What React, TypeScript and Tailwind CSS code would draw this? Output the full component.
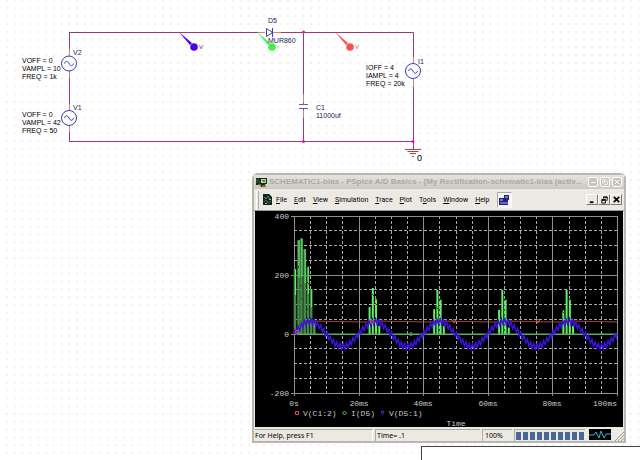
import { Copy, Minus, X } from 'lucide-react';
import type { ReactNode } from 'react';

const MENU = ['File', 'Edit', 'View', 'Simulation', 'Trace', 'Plot', 'Tools', 'Window', 'Help'];
const MNEMONIC: Record<string, number> = { Tools: 1 };

// plot area, in the chart's own units
const LEFT = 39;
const TOP = 5;
const WIDTH = 323;
const HEIGHT = 177;
const xOf = (ms: number) => LEFT + (ms / 100) * WIDTH;
const yOf = (value: number) => TOP + ((400 - value) / 600) * HEIGHT;

const FIRST_SPIKES = [
  [0.3, 220],
  [1.4, 318],
  [2.3, 324],
  [3.3, 288],
  [4.3, 228],
  [5.3, 152],
  [6.3, 42],
];
const SPIKE_GROUPS = [
  { start: 23.4, peaks: [92, 156, 118, 28] },
  { start: 43.4, peaks: [84, 150, 116, 28] },
  { start: 63.5, peaks: [82, 150, 116, 22] },
  { start: 83.4, peaks: [80, 150, 116, 28] },
];

export default function App() {
  return (
    <main className="relative min-h-screen overflow-hidden bg-white font-['Liberation_Sans',sans-serif]">
      <Schematic />
      <div className="absolute top-[446px] right-0 bottom-0 left-[421px] border-t border-l border-[#444] bg-white/60" />
      <SimulationWindow />
    </main>
  );
}

function Schematic() {
  return (
    <svg className="absolute inset-0 size-full" fontSize="7" fill="none" role="img" aria-label="Schematic">
      <defs>
        <pattern id="dots" x="3" y="4.5" width="7.8" height="7.8" patternUnits="userSpaceOnUse">
          <rect x="3.4" y="3.4" width="1" height="1" fill="#c4c4d0" />
        </pattern>
      </defs>
      <rect width="100%" height="100%" fill="url(#dots)" />

      <g stroke="#9a3a78">
        <path d="M69 32.500H265M273 32.500H413.500V63M413.500 79V149M69 141.500H413.500" />
        <path d="M69.500 32V55.500M69.500 71V110M69.500 126V141.500M303.500 32V104M303.500 109V141" />
      </g>
      <g stroke="#d98080">
        <path d="M69.500 49V56M69.500 71V78M69.500 104V110M69.500 126V132M413.500 57V63M413.500 79V87" />
        <path d="M258 32.500H265M273 32.500H281M303.500 94V103M303.500 110V118" />
      </g>

      <Source x={69} y={63.5} />
      <Source x={69} y={118} />
      <Source x={413} y={71} />

      <path d="M266.500 28.500V36.500L272.500 32.500ZM272.500 28V37" stroke="#3b3bb0" />
      <path d="M299 104.500H308M299 108.500H308" stroke="#5a5ac0" />
      <g fill="#e010d0">
        <circle cx="303.500" cy="32" r="1.500" />
        <circle cx="303.500" cy="141.500" r="1.500" />
        <circle cx="413" cy="141.500" r="1.500" />
      </g>
      <path d="M405 149.500H421M407.500 151.500H418.500M410 153.500H416M412 156.500H414" stroke="#b83c48" />

      <Probe x={194} y={47} color="#5200f0" label="V" />
      <Probe x={272} y={47} color="#44f044" label="I" />
      <Probe x={350} y={47} color="#ff5050" label="V" />

      <g fill="#000">
        <text x="22" y="63">VOFF = 0</text>
        <text x="22" y="71">VAMPL = 10</text>
        <text x="22" y="79">FREQ = 1k</text>
        <text x="22" y="117">VOFF = 0</text>
        <text x="22" y="125">VAMPL = 42</text>
        <text x="22" y="133">FREQ = 50</text>
        <text x="366" y="70">IOFF = 4</text>
        <text x="366" y="78">IAMPL = 4</text>
        <text x="366" y="86">FREQ = 20k</text>
        <text x="417" y="161" fontSize="9">0</text>
      </g>
      <g fill="#18185c">
        <text x="73" y="55">V2</text>
        <text x="73" y="110">V1</text>
        <text x="268" y="23">D5</text>
        <text x="268" y="43">MUR860</text>
        <text x="316" y="110">C1</text>
        <text x="316" y="118">11000uf</text>
        <text x="418" y="64">I1</text>
      </g>
    </svg>
  );
}

function Source({ x, y }: { x: number; y: number }) {
  return (
    <g transform={`translate(${x} ${y})`} stroke="#3a3ab8">
      <circle r="7.500" />
      <path d="M-4.500 0C-3.500 -3 -1.500 -3 0 0S3.500 3 4.500 0" />
    </g>
  );
}

function Probe({ x, y, color, label }: { x: number; y: number; color: string; label: string }) {
  return (
    <g transform={`translate(${x} ${y})`} fill={color}>
      <path d="M-15 -15L-2 -4L-4 -2Z" />
      <circle r="3.800" />
      <text x="5" y="2" fontSize="6">{label}</text>
    </g>
  );
}

function SimulationWindow() {
  return (
    <section className="absolute top-[173px] left-[252px] w-[374px] rounded-t-md border-2 border-[#b9b7b0] bg-[#ece9e2] font-['Noto_Sans',sans-serif] text-[7px] text-black">
      <header className="flex h-[14px] items-center gap-0.5 bg-linear-to-b from-[#e6e4df] to-[#cbc8c1] pr-0.5 pl-0.5">
        <AppIcon />
        <h1 className="min-w-0 flex-1 font-['Liberation_Sans',sans-serif] text-[8px] leading-3 font-bold whitespace-nowrap text-[#aaa8a3]">
          SCHEMATIC1-bias - PSpice A/D Basics - [My Rectification-schematic1-bias (activ...
        </h1>
        <div className="flex gap-0.5">
          <CaptionButton label="Minimize"><Minus size={7} strokeWidth={3} /></CaptionButton>
          <CaptionButton label="Maximize"><Copy size={6} strokeWidth={3} /></CaptionButton>
          <CaptionButton label="Close"><X size={8} strokeWidth={3} /></CaptionButton>
        </div>
      </header>

      <div className="flex h-[22px] items-center border-b border-[#999] pr-0.5 pl-0.5">
        <span className="h-[18px] w-[3px] border-x border-x-white border-r-[#b0aea8]" />
        <DocumentIcon />
        <nav className="flex flex-1 items-center gap-[7px] font-['Roboto',sans-serif]">
          {MENU.map((item) => {
            const at = MNEMONIC[item] ?? 0;
            return (
              <button key={item} type="button" className="leading-3">
                {item.slice(0, at)}
                <span className="underline">{item[at]}</span>
                {item.slice(at + 1)}
              </button>
            );
          })}
          <button
            type="button"
            aria-label="Show plot"
            className="grid h-4 w-[15px] place-items-center border border-[#aaa] border-r-white border-b-white bg-[#f6f5f2]"
          >
            <svg width="10" height="10" viewBox="0 0 10 10">
              <path d="M0 3H5V0H10V5H9V10H0Z" fill="#20208c" />
              <path d="M1 5H4M6 2H9" stroke="#d8d8c0" />
              <path d="M1 8H3M4 7V9M6 7V9M8 7V9" stroke="#b0b0f0" />
            </svg>
          </button>
        </nav>
        <div className="flex">
          <DocumentButton label="Minimize document">
            <path d="M2 8H6" strokeWidth="2" />
          </DocumentButton>
          <DocumentButton label="Restore document">
            <path d="M4 2H8V6H7M4 2V4M4 3H8M2 5H6V9H2ZM2 6H6" />
          </DocumentButton>
          <DocumentButton label="Close document">
            <path d="M2 2L8 8M8 2L2 8" strokeWidth="2" />
          </DocumentButton>
        </div>
      </div>

      <div className="mx-px bg-black">
        <Chart />
      </div>

      <footer className="flex h-[14px] items-stretch gap-0.5 pt-0.5 pl-px leading-3">
        <p className="w-[118px] border-t border-r border-t-[#aaa] border-r-white">For Help, press F1</p>
        <p className="flex-1 border-t border-l border-[#aaa] pl-px">Time= .1</p>
        <p className="w-[30px] border-t border-l border-[#aaa] pl-0.5">100%</p>
        <div
          role="progressbar"
          aria-label="Progress"
          aria-valuenow={100}
          className="flex items-center gap-0.5 border-t border-l border-[#aaa] px-px"
        >
          {Array.from({ length: 10 }, (_, i) => (
            <span key={i} className="h-2 w-[5px] bg-[#4b6798]" />
          ))}
        </div>
        <svg className="mx-0.5 h-[11px] w-[22px] bg-black" viewBox="0 0 22 11" fill="none">
          <path d="M0 6H5L7 3L10 9L12 2L15 9L17 5H22" stroke="#30b0d0" />
        </svg>
        <svg className="h-3 w-[9px]" viewBox="0 0 9 12" fill="none">
          <path d="M0 12L9 3M3 12L9 6M6 12L9 9" stroke="#a09e98" />
        </svg>
      </footer>
    </section>
  );
}

function CaptionButton({ label, children }: { label: string; children: ReactNode }) {
  return (
    <button
      type="button"
      aria-label={label}
      className="grid size-[10px] place-items-center rounded-xs border border-white bg-[#c6c4be] text-white"
    >
      {children}
    </button>
  );
}

function DocumentButton({ label, children }: { label: string; children: ReactNode }) {
  return (
    <button
      type="button"
      aria-label={label}
      className="grid h-[11px] w-3 place-items-center border border-white border-r-[#777] border-b-[#777]"
    >
      <svg width="9" height="9" viewBox="0 0 10 10" fill="none" stroke="#000">
        {children}
      </svg>
    </button>
  );
}

function AppIcon() {
  return (
    <svg className="size-[11px] shrink-0" viewBox="0 0 11 11" fill="none">
      <path d="M0 1H11V7H9L10 10H5L4 8H0Z" fill="#222" />
      <path d="M5 2H10V6H5Z" fill="#b8d8b8" />
      <path d="M0 3H3M0 5H4M6 4L7 3L8 5L9 3" stroke="#108a38" />
      <path d="M2 8H5M6 9H10" stroke="#d0c030" />
    </svg>
  );
}

function DocumentIcon() {
  return (
    <svg className="mr-1 ml-1 h-[11px] w-[9px] shrink-0" viewBox="0 0 9 11" fill="none">
      <path d="M0 0H6L9 3V11H0Z" fill="#16241c" />
      <path d="M1 3L3 5L5 2L7 5" stroke="#28a858" />
      <path d="M1 8L3 6L5 9L8 7" stroke="#3858c8" />
      <path d="M2 9.500H4M6 5.500H8" stroke="#c8b030" />
    </svg>
  );
}

function Chart() {
  const verticals = Array.from({ length: 21 }, (_, i) => i * 5);
  const horizontals = Array.from({ length: 13 }, (_, i) => i * 50 - 200);

  return (
    <svg
      className="block w-full font-['Liberation_Mono',monospace]"
      viewBox="0 0 368 216"
      fontSize="8"
      fill="none"
      role="img"
      aria-label="V(C1:2), I(D5) and V(D5:1) over time"
    >
      {verticals.map((ms) => (
        <path
          key={ms}
          d={`M${Math.round(xOf(ms)) + 0.5} ${TOP}V${TOP + HEIGHT + (ms % 20 ? 0 : 3)}`}
          stroke={ms % 20 ? '#a8a8a8' : '#909090'}
          strokeDasharray={ms % 20 ? '3 2' : undefined}
        />
      ))}
      {horizontals.map((value) => (
        <path
          key={value}
          d={`M${value % 200 ? LEFT : LEFT - 3} ${Math.floor(yOf(value)) + 0.5}H${LEFT + WIDTH}`}
          stroke={value % 200 ? '#a8a8a8' : '#909090'}
          strokeDasharray={value % 200 ? '3 2' : undefined}
        />
      ))}

      <g stroke="#468a4a" strokeWidth="2.600">
        {FIRST_SPIKES.map(([ms, peak]) => (
          <path key={ms} d={`M${xOf(ms)} ${yOf(0)}V${yOf(peak)}`} />
        ))}
      </g>
      <g stroke="#62f068">
        {FIRST_SPIKES.map(([ms, peak]) => (
          <path key={ms} d={`M${xOf(ms) + 0.5} ${yOf(peak * 0.6)}V${yOf(peak)}`} />
        ))}
        {SPIKE_GROUPS.map(({ start, peaks }) =>
          peaks.map((peak, i) => (
            <path key={start + i} d={`M${xOf(start + i)} ${yOf(0)}V${yOf(peak)}`} strokeWidth="2" />
          )),
        )}
        <path d={`M${LEFT} ${yOf(0)}H${LEFT + WIDTH}`} stroke="#48b850" />
      </g>
      <g stroke="#204824">
        <path d="M42 54L44 56L42 58M45 74L48 76M46 87L49 90M52 71L54 73M42 113L44 115M51 96L53 99" />
        <path d="M116 82L119 85M119 91L122 94M180 95L183 98M307 100L310 103M311 110L314 113" />
      </g>

      <path d={capacitorTrace()} stroke="#c04c4c" />
      <path d={sourceTrace()} stroke="#3a12d8" strokeWidth="1.500" />
      <g stroke="#e05050">
        <circle cx="42" cy="121" r="1.500" />
        <circle cx="117" cy="111" r="1.500" />
        <circle cx="199" cy="110" r="1.500" />
        <circle cx="283" cy="110" r="1.500" />
      </g>
      <circle cx="156" cy="123" r="1.500" stroke="#48a850" />

      <g fill="#c8c8c8">
        <g textAnchor="end">
          <text x="34" y="8">400</text>
          <text x="34" y="67">200</text>
          <text x="34" y="126">0</text>
          <text x="34" y="185">-200</text>
        </g>
        <g textAnchor="middle">
          <text x="39" y="195">0s</text>
          <text x="104" y="195">20ms</text>
          <text x="168" y="195">40ms</text>
          <text x="233" y="195">60ms</text>
          <text x="297" y="195">80ms</text>
          <text x="350" y="195">100ms</text>
          <text x="201" y="215">Time</text>
        </g>
        <text x="48" y="205">V(C1:2)</text>
        <text x="96" y="205">I(D5)</text>
        <text x="134" y="205">V(D5:1)</text>
      </g>
      <path d="M40.500 200.500H43.500V203.500H40.500Z" stroke="#e05050" />
      <path d="M89.500 200L91.500 202L89.500 204L87.500 202Z" stroke="#60c868" />
      <path d="M126 200.500H129L127.500 203.500Z" stroke="#4a20f0" />
    </svg>
  );
}

function sourceTrace(): string {
  return tracePath(0, (ms) => 42 * Math.sin((ms * Math.PI) / 10) + 9 * Math.sin(ms * Math.PI * 2));
}

function capacitorTrace(): string {
  // charges during the first quarter cycle, then droops between the peaks
  return tracePath(0, (ms) => {
    if (ms < 5) return 44 * Math.sin((ms * Math.PI) / 10);
    return 44 - (((ms - 5) % 20) / 20) * 4;
  });
}

function tracePath(from: number, f: (ms: number) => number): string {
  const points: string[] = [];
  for (let ms = from; ms <= 100; ms += 0.25) {
    points.push(`${xOf(ms).toFixed(1)} ${yOf(f(ms)).toFixed(1)}`);
  }
  return `M${points.join('L')}`;
}
